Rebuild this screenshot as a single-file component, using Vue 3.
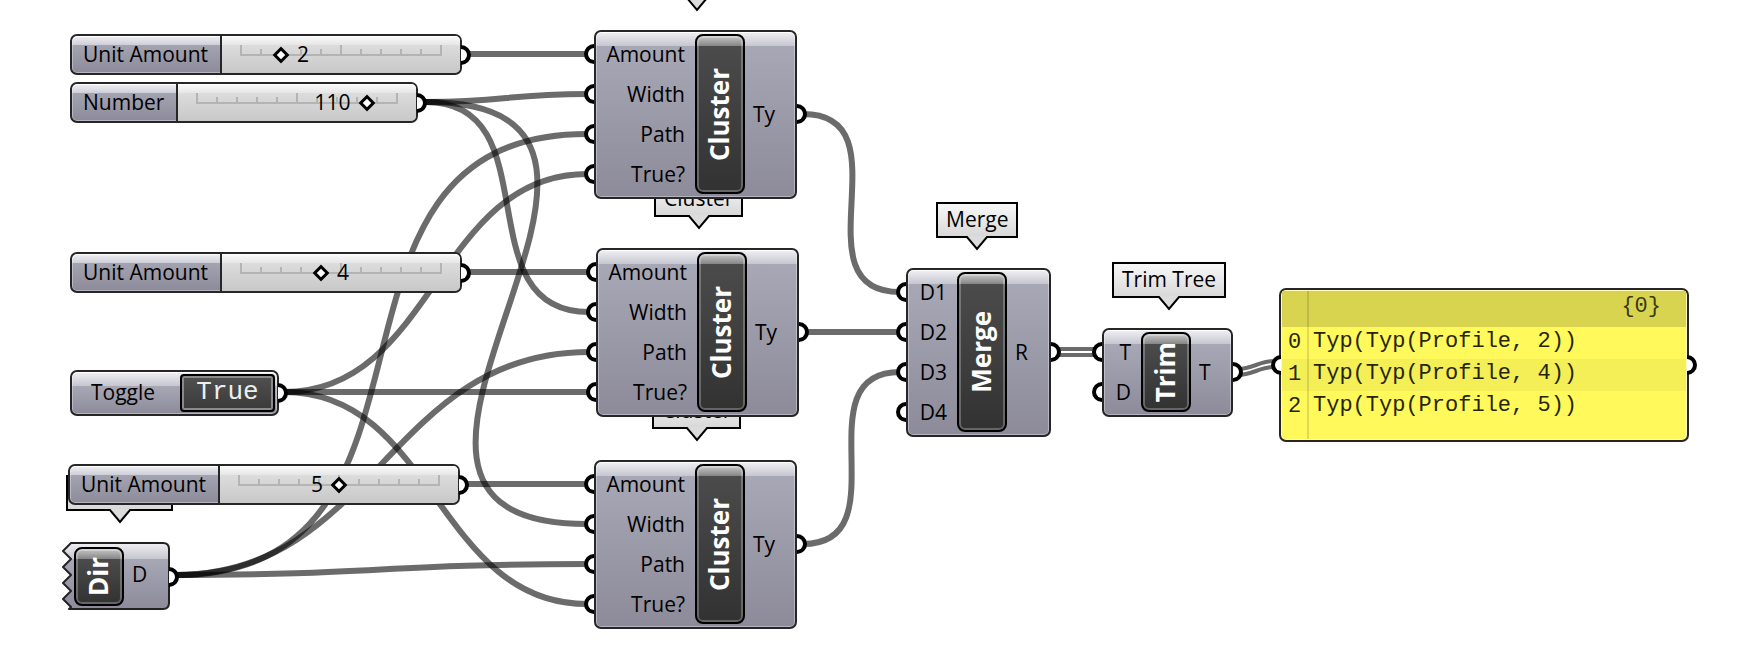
<script setup>
import { ref } from 'vue'

const sliders = ref([
  { id: 'amount-a', label: 'Unit Amount', x: 70, y: 34, value: 2, max: 10, side: 'after' },
  { id: 'number', label: 'Number', x: 70, y: 82, value: 110, max: 130, side: 'before' },
  { id: 'amount-b', label: 'Unit Amount', x: 70, y: 252, value: 4, max: 10, side: 'after' },
  { id: 'amount-c', label: 'Unit Amount', x: 68, y: 464, value: 5, max: 10, side: 'before' },
])

const toggle = ref(true)

const clusterInputs = ['Amount', 'Width', 'Path', 'True?']
const components = [
  { id: 'c1', kind: 'cluster', name: 'Cluster', x: 594, y: 30, inputs: clusterInputs, outputs: ['Ty'] },
  { id: 'c2', kind: 'cluster', name: 'Cluster', x: 596, y: 248, inputs: clusterInputs, outputs: ['Ty'] },
  { id: 'c3', kind: 'cluster', name: 'Cluster', x: 594, y: 460, inputs: clusterInputs, outputs: ['Ty'] },
  { id: 'merge', kind: 'merge', name: 'Merge', x: 906, y: 268, inputs: ['D1', 'D2', 'D3', 'D4'], outputs: ['R'] },
  { id: 'trim', kind: 'trim', name: 'Trim', x: 1102, y: 328, inputs: ['T', 'D'], outputs: ['T'] },
]

const tags = [
  { id: 't1', text: 'Cluster', x: 652, y: -37 },
  { id: 't2', text: 'Cluster', x: 654, y: 181 },
  { id: 't3', text: 'Cluster', x: 652, y: 393 },
  { id: 't4', text: 'Merge', x: 936, y: 202 },
  { id: 't5', text: 'Trim Tree', x: 1112, y: 262 },
  { id: 't6', text: '', x: 66, y: 475, wide: true },
]

// from x, from y, to x, to y, handle length
const wires = [
  [465, 54, 590, 54, 60],
  [465, 272, 590, 272, 60],
  [463, 484, 590, 484, 60],
  [426, 102, 587, 94, 80],
  [426, 102, 589, 312, 126],
  [426, 102, 587, 524, 303],
  [284, 392, 587, 174, 150],
  [284, 392, 590, 392, 150],
  [284, 392, 587, 604, 150],
  [175, 575, 587, 134, 301],
  [175, 575, 589, 352, 200],
  [175, 575, 587, 564, 200],
  [803, 114, 900, 292, 106],
  [805, 332, 900, 332, 40],
  [803, 544, 900, 372, 100],
]
const pairs = [
  [1056, 349, 1096, 349, 16],
  [1056, 355, 1096, 355, 16],
  [1238, 369, 1274, 361, 14],
  [1238, 375, 1274, 367, 14],
]
const curve = ([x1, y1, x2, y2, c]) => `M${x1} ${y1}C${x1 + c} ${y1} ${x2 - c} ${y2} ${x2} ${y2}`

const ticks = Array.from({ length: 11 }, (_, i) => `M${1 + i * 20} 11V${i % 5 === 0 ? 1 : 5}`).join('')

const rows = ['Typ(Typ(Profile, 2))', 'Typ(Typ(Profile, 4))', 'Typ(Typ(Profile, 5))']

const at = (n) => ({ left: n.x + 'px', top: n.y + 'px' })
const valueAt = (s) => {
  const p = (s.value / s.max) * 200
  return s.side === 'after' ? { left: p + 16 + 'px' } : { right: 200 - p + 16 + 'px' }
}
</script>

<template>
  <main class="canvas">
    <svg class="wires" aria-hidden="true">
      <path v-for="(w, i) in wires" :key="i" class="wire" :d="curve(w)" />
      <path v-for="(w, i) in pairs" :key="'p' + i" class="wire thin" :d="curve(w)" />
    </svg>

    <div v-for="t in tags" :key="t.id" class="tag" :class="{ wide: t.wide }" :style="at(t)">
      <span>{{ t.text }}</span>
      <svg class="tail" width="24" height="15" viewBox="0 0 24 15">
        <path d="M0 0H24V2H22L12 14L2 2H0Z" fill="#dcdcdc" />
        <path d="M0 1H2L12 13L22 1H24" fill="none" stroke="#000" stroke-width="2" />
      </svg>
    </div>

    <section v-for="s in sliders" :key="s.id" class="node slider" :style="at(s)">
      <label class="slider-label" :for="s.id">{{ s.label }}</label>
      <div class="slider-field">
        <div class="rail">
          <svg class="ticks" width="202" height="12" aria-hidden="true">
            <path :d="'M0 11H202' + ticks" />
          </svg>
          <output class="value" :for="s.id" :style="valueAt(s)">{{ s.value }}</output>
          <input :id="s.id" v-model.number="s.value" type="range" min="0" :max="s.max" />
        </div>
      </div>
      <i class="port out"></i>
    </section>

    <section class="node toggle">
      <label class="toggle-label" for="toggle">Toggle</label>
      <button id="toggle" type="button" @click="toggle = !toggle">{{ toggle ? 'True' : 'False' }}</button>
      <i class="port out"></i>
    </section>

    <section class="dir">
      <svg class="torn" width="108" height="69" viewBox="0 0 108 69" aria-hidden="true">
        <defs>
          <linearGradient id="dirFill" x1="0" y1="0" x2="0" y2="1">
            <stop offset="0" stop-color="#f0f0f4" />
            <stop offset="0.240" stop-color="#c6c6cf" />
            <stop offset="0.241" stop-color="#a7a7b5" />
            <stop offset="1" stop-color="#8d8b9a" />
          </linearGradient>
        </defs>
        <path
          d="M9 1H101Q107 1 107 7V61Q107 67 101 67H7L9 65L1 57L9 49L1 41L9 33L1 25L9 17L1 9Z"
          fill="url(#dirFill)" stroke="#222" stroke-width="2" stroke-linejoin="round"
        />
      </svg>
      <div class="core"><span>Dir</span></div>
      <span class="dir-out">D</span>
      <i class="port out"></i>
    </section>

    <section v-for="c in components" :key="c.id" class="node component" :class="c.kind" :style="at(c)">
      <ul class="inputs">
        <li v-for="p in c.inputs" :key="p"><i class="port in"></i>{{ p }}</li>
      </ul>
      <div class="core"><span>{{ c.name }}</span></div>
      <ul class="outputs">
        <li v-for="p in c.outputs" :key="p">{{ p }}<i class="port out"></i></li>
      </ul>
    </section>

    <section class="panel">
      <i class="port in"></i>
      <table>
        <thead>
          <tr><th></th><th scope="col">{0}</th></tr>
        </thead>
        <tbody>
          <tr v-for="(r, i) in rows" :key="i"><td>{{ i }}</td><td>{{ r }}</td></tr>
        </tbody>
        <tfoot>
          <tr><td></td><td></td></tr>
        </tfoot>
      </table>
      <i class="port out"></i>
    </section>
  </main>
</template>

<style>
body {
  margin: 0;
  background: #fff;
}
</style>

<style scoped>
* {
  box-sizing: border-box;
}
.canvas {
  position: relative;
  min-height: 100vh;
  overflow: hidden;
  color: #000;
  font: 400 21px/28px "Open Sans", "Noto Sans", sans-serif;
}
.wires {
  position: absolute;
  inset: 0;
  width: 100%;
  height: 100%;
}
.wire {
  fill: none;
  stroke: #000;
  stroke-opacity: 0.58;
  stroke-width: 6;
}
.wire.thin {
  stroke-width: 4;
}

.port {
  position: absolute;
  top: 50%;
  width: 10px;
  height: 20px;
  margin-top: -10px;
  border: 4px solid #000;
  background: #fff;
}
.port.in {
  right: 100%;
  border-right: 0;
  border-radius: 10px 0 0 10px;
}
.port.out {
  left: 100%;
  border-left: 0;
  border-radius: 0 10px 10px 0;
}

.tag {
  position: absolute;
  height: 36px;
  padding: 1px 8px;
  border: 2px solid #000;
  background: linear-gradient(#f8f8f8, #d8d8d8);
  white-space: nowrap;
}
.tag.wide {
  width: 107px;
}
.tail {
  position: absolute;
  top: 100%;
  left: 50%;
  margin-left: -12px;
}

.node {
  position: absolute;
  display: flex;
  border: 2px solid #262626;
  border-radius: 7px;
  background: linear-gradient(#f0f0f4, #c6c6cf 14px, #a7a7b5 14px, #8d8b9a);
  box-shadow: inset 0 1px #fff, inset 0 0 0 1px rgba(255, 255, 255, 0.35);
}
.node > .port.out {
  margin-left: 1px;
}

.slider {
  height: 41px;
  background: linear-gradient(#f0f0f4, #ceced8 9px, #a3a3b1 9px, #8d8b9a);
}
.slider-label {
  padding: 4px 12px 0 11px;
  white-space: nowrap;
}
.slider-field {
  padding: 0 19px;
  border-left: 2px solid #262626;
  border-radius: 0 5px 5px 0;
  background: linear-gradient(#fafafa, #e6e6e6 9px, #dcdcdc 9px, #c8c8c8);
  box-shadow: inset 0 1px #fff;
}
.rail {
  position: relative;
  width: 200px;
  height: 37px;
}
.ticks {
  position: absolute;
  top: 8px;
  left: -1px;
}
.ticks path {
  fill: none;
  stroke: #b4b4b4;
  stroke-width: 2;
}
.value {
  position: absolute;
  top: 4px;
}
.rail input {
  position: absolute;
  top: 8px;
  left: -6px;
  width: 212px;
  height: 22px;
  margin: 0;
  appearance: none;
  background: none;
}
.rail input::-webkit-slider-thumb {
  appearance: none;
  box-sizing: border-box;
  width: 12px;
  height: 12px;
  border: 3px solid #000;
  background: #fff;
  transform: rotate(45deg);
}

.core {
  display: flex;
  align-items: center;
  justify-content: center;
  width: 50px;
  padding-right: 2px;
  border: 2px solid #000;
  border-radius: 8px;
  background: linear-gradient(#c8c8c8, #858585 10px, #4b4b4b 10px, #323232);
  box-shadow: inset 0 0 0 2px rgba(255, 255, 255, 0.25);
  color: #fff;
  font-size: 26px;
  font-weight: 700;
}
.core span {
  writing-mode: vertical-rl;
  transform: rotate(180deg);
}

.toggle {
  top: 370px;
  left: 70px;
  width: 209px;
  justify-content: space-between;
  padding: 2px;
}
.toggle-label {
  padding: 4px 0 0 17px;
}
.toggle button {
  width: 95px;
  height: 38px;
  padding: 0 0 3px;
  border: 2px solid #000;
  border-radius: 4px;
  background: linear-gradient(#505050, #3a3a3a);
  box-shadow: inset 0 0 0 2px #8a8a8a;
  color: #eee;
  font: 26px/28px "Liberation Mono", monospace;
}

.dir {
  position: absolute;
  top: 542px;
  left: 62px;
  display: flex;
  width: 108px;
  height: 69px;
  padding: 5px 0 5px 12px;
}
.torn {
  position: absolute;
  inset: 0;
}
.dir .core,
.dir-out {
  position: relative;
}
.dir-out {
  padding: 13px 0 0 8px;
}
.dir .port {
  margin-left: -1px;
}

.component {
  padding: 2px 2px 3px;
}
.cluster {
  width: 203px;
}
.merge {
  width: 145px;
}
.trim {
  width: 131px;
}
.component ul {
  display: flex;
  flex-direction: column;
  justify-content: center;
  margin: 0;
  padding: 0;
  list-style: none;
}
.component li {
  position: relative;
  line-height: 40px;
}
.inputs {
  text-align: right;
}
.inputs li {
  padding-right: 10px;
}
.outputs {
  flex: 1;
}
.outputs li {
  padding-left: 8px;
}
.cluster .inputs {
  width: 97px;
}
.merge .inputs {
  width: 47px;
}
.trim .inputs {
  width: 35px;
}
.component .port.in {
  margin-right: 4px;
}
.component .port.out {
  margin-left: 4px;
}

.panel {
  position: absolute;
  top: 288px;
  left: 1279px;
  width: 410px;
  border: 2px solid #262626;
  border-radius: 7px;
  background: #fff95b;
  box-shadow: inset 0 0 0 1px #fffbc0;
  font: 22px/32px "Liberation Mono", monospace;
}
.panel table {
  width: 100%;
  padding: 1px;
  border-spacing: 0;
}
.panel th {
  height: 36px;
  padding: 0 25px 4px 0;
  background: #d9d44f;
  color: #3a3818;
  font-weight: 400;
  line-height: 30px;
  text-align: right;
}
.panel th:first-child,
.panel td:first-child {
  width: 27px;
  padding: 0;
  border-right: 2px solid rgba(0, 0, 0, 0.12);
  text-align: center;
}
.panel td {
  height: 32px;
  padding: 0 0 2px 4px;
  color: #26250c;
  line-height: 30px;
}
.panel tfoot td {
  height: 16px;
  padding: 0;
}
.panel tbody tr:nth-child(2) {
  background: #f4ef56;
}
</style>
